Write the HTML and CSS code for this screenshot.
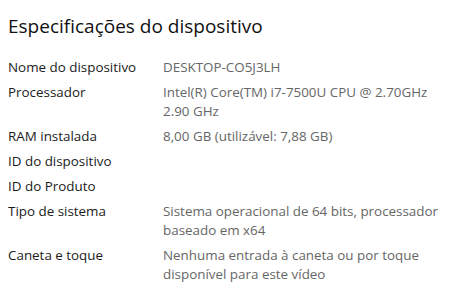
FILE: index.html
```html
<!DOCTYPE html>
<html lang="pt"><head><meta charset="utf-8"><link rel="stylesheet" href="styles.css"></head>
<body>
<h1 class="title">Especificações do dispositivo</h1>
<dl class="specs">
  <dt>Nome do dispositivo</dt><dd>DESKTOP-CO5J3LH</dd>
  <dt>Processador</dt><dd>Intel(R) Core(TM) i7-7500U CPU @ 2.70GHz<br>2.90 GHz</dd>
  <dt>RAM instalada</dt><dd>8,00 GB (utilizável: 7,88 GB)</dd>
  <dt>ID do dispositivo</dt><dd></dd>
  <dt>ID do Produto</dt><dd></dd>
  <dt>Tipo de sistema</dt><dd>Sistema operacional de 64 bits, processador<br>baseado em x64</dd>
  <dt>Caneta e toque</dt><dd>Nenhuma entrada à caneta ou por toque<br>disponível para este vídeo</dd>
</dl>
</body></html>
```
FILE: styles.css
```css
html,body{background:#fff;}
body{margin:0;padding:0 8px;font-family:"Open Sans","Noto Sans",sans-serif;}
.title{font-size:19px;font-weight:400;line-height:26px;margin:13px 0 0;color:#111;}
.specs{display:grid;grid-template-columns:155px 1fr;row-gap:6px;margin:19px 0 0;font-size:13.4px;line-height:19px;}
.specs dt{color:#1b1b1b;margin:0;}
.specs dd{color:#666;margin:0;min-height:19px;}
```
